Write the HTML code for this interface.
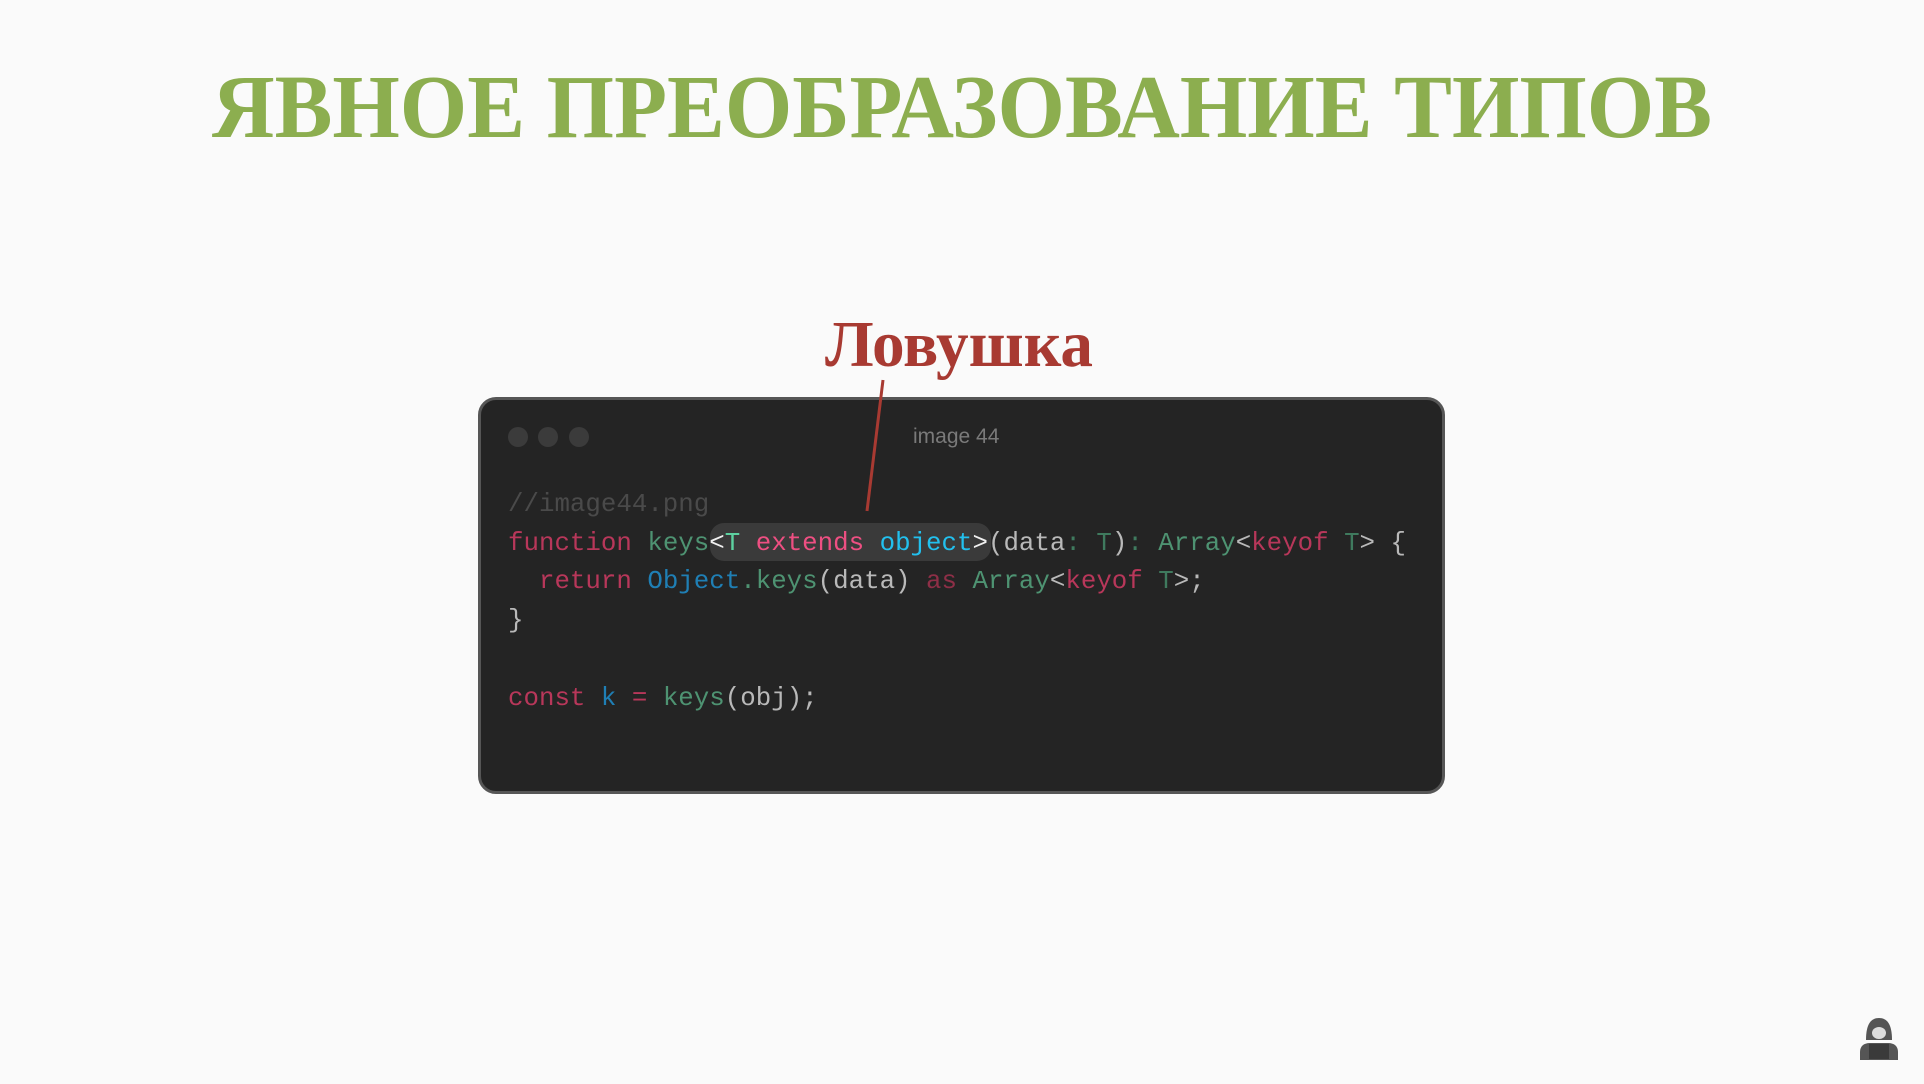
<!DOCTYPE html>
<html><head><meta charset="utf-8"><style>
html,body{margin:0;padding:0;}
body{width:1924px;height:1084px;background:#fafafa;position:relative;overflow:hidden;}
svg.t{position:absolute;left:0;top:0;}
.card{position:absolute;left:478px;top:397px;width:961px;height:391px;background:#242424;border:3px solid #565656;border-radius:18px;}
.dot{position:absolute;top:427px;width:20px;height:20px;border-radius:50%;background:#3b3b3b;}
.ttl{position:absolute;left:913px;top:425px;font:21px "Liberation Sans",sans-serif;color:#7a7a7a;}
.code{position:absolute;left:508px;font:25.8px/1 "Liberation Mono",monospace;white-space:pre;color:#b9b9b9;}
.hl{position:absolute;left:710px;top:523px;width:281px;height:38px;border-radius:14px;background:#3a3a3a;}
.r{color:#b8375a}.g{color:#4e9372}.tl{color:#5dd1a0}.p{color:#ee4f82}.c{color:#22c0ee}.w{color:#f0f0f0}.dg{color:#3f7a5e}.b{color:#1f7fb5}.cm{color:#4a4a4a}.rd{color:#8e2f47}
</style></head><body>
<svg class="t" width="1924" height="1084">
<text x="212" y="137" textLength="1500" lengthAdjust="spacingAndGlyphs" font-family="Liberation Serif,serif" font-weight="bold" font-size="90" fill="#8cae4f">ЯВНОЕ ПРЕОБРАЗОВАНИЕ ТИПОВ</text>
<text x="825" y="366" textLength="268" lengthAdjust="spacingAndGlyphs" font-family="Liberation Serif,serif" font-weight="bold" font-size="66" fill="#a83a32">Ловушка</text>
</svg>
<div class="card"></div>
<div class="dot" style="left:508px"></div><div class="dot" style="left:538px"></div><div class="dot" style="left:569px"></div>
<div class="ttl">image 44</div>
<div class="hl"></div>
<div class="code cm" style="top:492px">//image44.png</div>
<div class="code" style="top:531px"><span class="r">function</span> <span class="g">keys</span><span class="w">&lt;</span><span class="tl">T</span> <span class="p">extends</span> <span class="c">object</span><span class="w">&gt;</span>(data<span class="dg">:</span> <span class="dg">T</span>)<span class="dg">:</span> <span class="g">Array</span>&lt;<span class="r">keyof</span> <span class="dg">T</span>&gt; {</div>
<div class="code" style="top:569px">  <span class="r">return</span> <span class="b">Object</span><span class="g">.keys</span>(data) <span class="rd">as</span> <span class="g">Array</span>&lt;<span class="r">keyof</span> <span class="dg">T</span>&gt;;</div>
<div class="code" style="top:608px">}</div>
<div class="code" style="top:686px"><span class="r">const</span> <span class="b">k</span> <span class="r">=</span> <span class="g">keys</span>(obj);</div>
<svg class="t" width="1924" height="1084">
<line x1="883" y1="380" x2="867" y2="511" stroke="#a83a32" stroke-width="3"/>
<g fill="#555">
<path d="M1866 1040 C1866 1024 1871 1018 1879 1018 C1887 1018 1892 1024 1892 1040 Z"/>
<path d="M1860 1060 L1860 1052 C1860 1046 1864 1043 1870 1043 L1888 1043 C1894 1043 1898 1046 1898 1052 L1898 1060 Z"/>
</g>
<ellipse cx="1879" cy="1033" rx="7" ry="6" fill="#ddd"/>
<rect x="1869" y="1044" width="20" height="15" fill="#3a3a3a"/>
</svg>
</body></html>
